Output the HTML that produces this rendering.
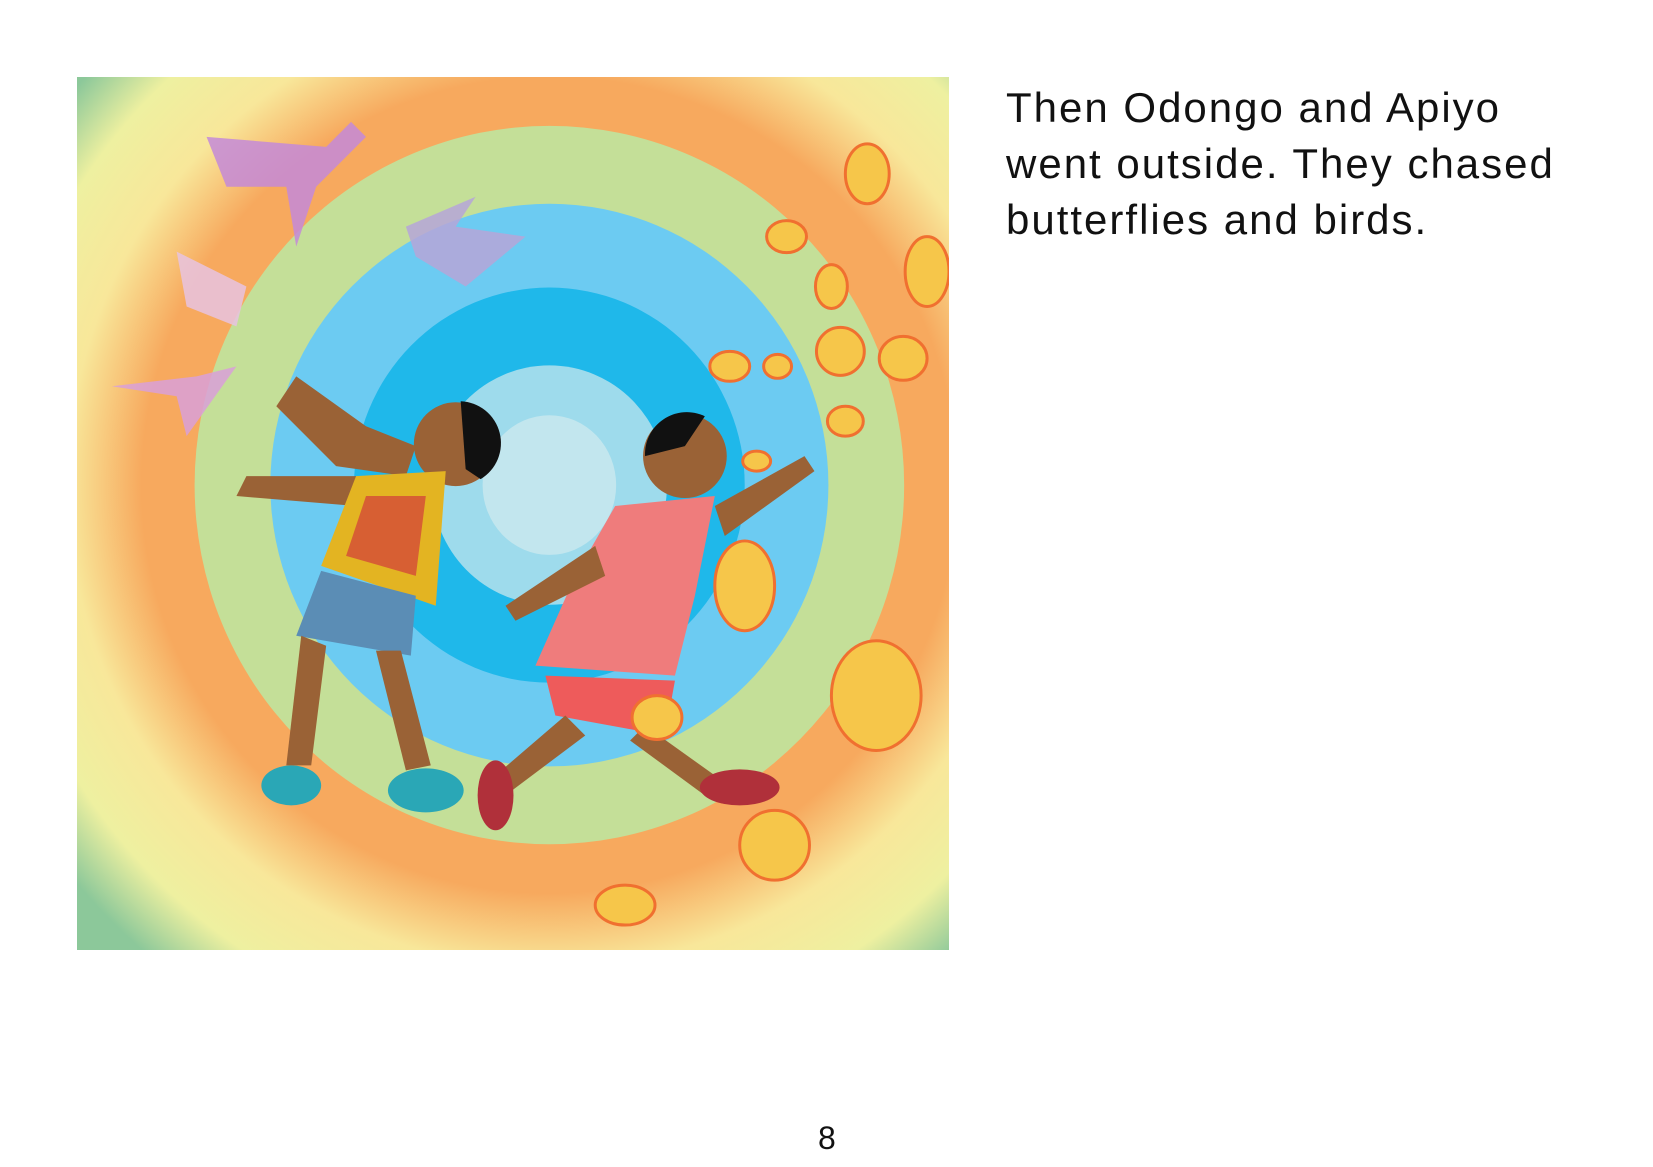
<!DOCTYPE html>
<html><head><meta charset="utf-8"><style>
html,body{margin:0;padding:0;background:#fff;width:1653px;height:1167px;overflow:hidden}
.txt{position:absolute;left:1006px;top:80px;font-family:"Liberation Sans",sans-serif;font-size:42px;line-height:56px;color:#111;width:572px;letter-spacing:2px}
.pn{position:absolute;left:818px;top:1120px;font-family:"Liberation Sans",sans-serif;font-size:32px;color:#111}
svg{position:absolute;left:77px;top:77px}
</style></head><body>
<svg width="872" height="873" viewBox="0 0 875 875" preserveAspectRatio="none">
<defs>
<radialGradient id="bg" cx="474" cy="409" r="620" gradientUnits="userSpaceOnUse">
<stop offset="0.66" stop-color="#f7a95e"/>
<stop offset="0.78" stop-color="#f8e79a"/>
<stop offset="0.9" stop-color="#eef0a0"/>
<stop offset="1" stop-color="#8cc89a"/>
</radialGradient>
</defs>
<rect width="875" height="875" fill="url(#bg)"/>
<ellipse cx="474" cy="409" rx="356" ry="360" fill="#c4df98"/>
<ellipse cx="474" cy="409" rx="280" ry="282" fill="#6ccbf2"/>
<ellipse cx="474" cy="409" rx="196" ry="198" fill="#1fb8ea"/>
<ellipse cx="474" cy="409" rx="118" ry="120" fill="#9edbec"/>
<ellipse cx="474" cy="409" rx="67" ry="70" fill="#c2e6ee"/>
<path d="M200 330 L260 390 L330 400 L340 370 L290 350 L220 300Z" fill="#9a6236"/>
<path d="M160 420 L280 430 L280 400 L170 400Z" fill="#9a6236"/>
<circle cx="380" cy="368" r="42" fill="#9a6236"/>
<path d="M385 325 a42 42 0 0 1 20 78 l-15 -10z" fill="#111"/>
<path d="M280 400 L370 395 L360 530 L245 490Z" fill="#e3b422"/>
<path d="M290 420 L350 420 L340 500 L270 480Z" fill="#d23b3b" opacity="0.7"/>
<path d="M245 495 L340 520 L335 580 L220 560Z" fill="#5b8db5"/>
<path d="M225 560 L250 570 L235 690 L210 690Z" fill="#9a6236"/>
<path d="M300 575 L325 575 L355 690 L330 695Z" fill="#9a6236"/>
<ellipse cx="215" cy="710" rx="30" ry="20" fill="#2aa7b6"/>
<ellipse cx="350" cy="715" rx="38" ry="22" fill="#2aa7b6"/>
<circle cx="610" cy="380" r="42" fill="#9a6236"/>
<path d="M570 380 a42 42 0 0 1 60 -40 l-20 30z" fill="#111"/>
<path d="M540 430 L640 420 L620 520 L600 600 L460 590 L500 500Z" fill="#ef7c7c"/>
<path d="M640 430 L730 380 L740 395 L650 460Z" fill="#9a6236"/>
<path d="M520 470 L430 530 L440 545 L530 500Z" fill="#9a6236"/>
<path d="M470 600 L600 605 L590 660 L480 640Z" fill="#ee5b5b"/>
<path d="M490 640 L420 700 L430 720 L510 660Z" fill="#9a6236"/>
<path d="M570 650 L640 700 L630 720 L555 665Z" fill="#9a6236"/>
<ellipse cx="420" cy="720" rx="18" ry="35" fill="#b0303a"/>
<ellipse cx="665" cy="712" rx="40" ry="18" fill="#b0303a"/>
<path d="M130 60 L250 70 L275 45 L290 60 L240 110 L220 170 L210 110 L150 110Z" fill="#c48ad8" opacity="0.85"/>
<path d="M330 150 L400 120 L380 150 L450 160 L390 210 L340 180Z" fill="#b6a6d8" opacity="0.85"/>
<path d="M100 175 L170 210 L160 250 L110 230Z" fill="#e7c3e0" opacity="0.85"/>
<path d="M35 310 L120 300 L160 290 L110 360 L100 320Z" fill="#d9a0d8" opacity="0.85"/>
<g fill="#f6c64a" stroke="#f07030" stroke-width="3">
<ellipse cx="793" cy="97" rx="22" ry="30"/>
<ellipse cx="712" cy="160" rx="20" ry="16"/>
<ellipse cx="853" cy="195" rx="22" ry="35"/>
<ellipse cx="757" cy="210" rx="16" ry="22"/>
<ellipse cx="766" cy="275" rx="24" ry="24"/>
<ellipse cx="829" cy="282" rx="24" ry="22"/>
<ellipse cx="655" cy="290" rx="20" ry="15"/>
<ellipse cx="703" cy="290" rx="14" ry="12"/>
<ellipse cx="771" cy="345" rx="18" ry="15"/>
<ellipse cx="682" cy="385" rx="14" ry="10"/>
<ellipse cx="670" cy="510" rx="30" ry="45"/>
<ellipse cx="802" cy="620" rx="45" ry="55"/>
<ellipse cx="582" cy="642" rx="25" ry="22"/>
<ellipse cx="700" cy="770" rx="35" ry="35"/>
<ellipse cx="550" cy="830" rx="30" ry="20"/>
</g>
</svg>
<div class="txt">Then Odongo and Apiyo went outside. They chased butterflies and birds.</div>
<div class="pn">8</div>
</body></html>
